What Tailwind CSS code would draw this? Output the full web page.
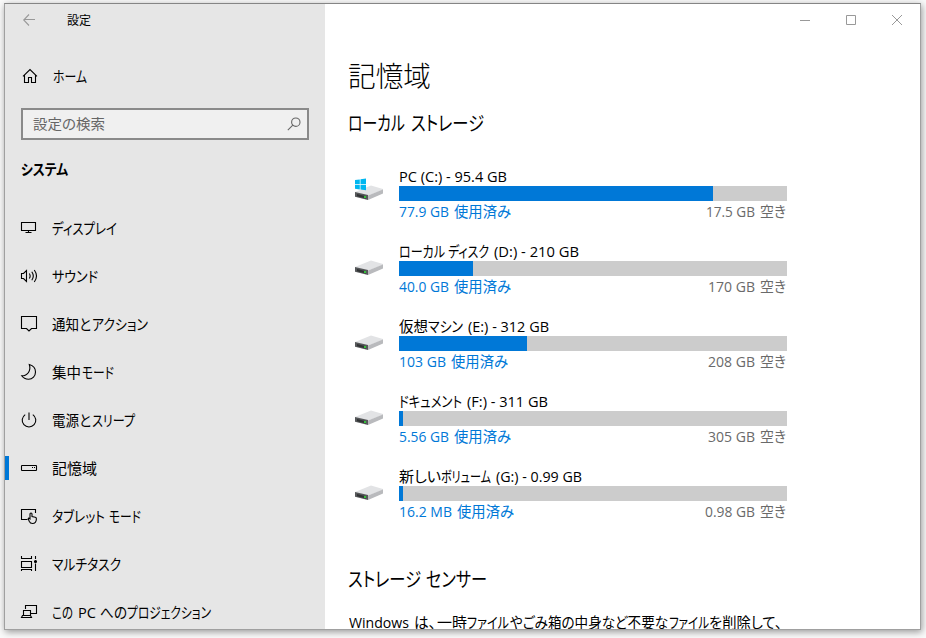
<!DOCTYPE html>
<html lang="ja">

<head>
    <meta charset="UTF-8">
    <meta name="viewport" content="width=device-width, initial-scale=1.0">
    <title>設定</title>
    <script src="https://cdn.jsdelivr.net/npm/@tailwindcss/browser@4"></script>
</head>

<body class="h-[638px] w-[926px] overflow-hidden bg-[#fafafa] pt-[3px] pl-[4px] font-['Open_Sans','Noto_Sans_CJK_JP',sans-serif] text-black">
    <div class="flex h-[627px] w-[917px] overflow-hidden border border-[#a0a0a0] border-t-[#858585] bg-white shadow-[1px_2px_7px_rgba(0,0,0,0.4)]">

        <!-- sidebar -->
        <aside class="flex w-[320px] shrink-0 flex-col bg-[#e6e6e6]">
            <div class="flex h-8 shrink-0 items-center pl-[18px]">
                <svg class="h-3 w-3" viewBox="0 0 12 12" fill="none" stroke="#999" stroke-width="1.1"><path d="M6 .5L.7 6L6 11.5M.7 5.5H12" /></svg>
                <div class="ml-[32px] pt-[2px] text-[12px] leading-8" data-runs="設定:0:24"></div>
            </div>

            <div class="mt-4 flex h-12 shrink-0 items-center pl-[17px]">
                <svg class="h-4 w-4" viewBox="0 0 16 16" fill="none" stroke="#000" stroke-width="1.1"><path d="M1 8.3L8 1.5L15 8.3M2.5 7V14.5H6.5V9.5H9.5V14.5H13.5V7" /></svg>
                <div class="ml-[15px] text-[15px] leading-6" data-runs="ホーム:0:34"></div>
            </div>

            <div class="mt-2 ml-4 flex h-8 w-[288px] shrink-0 items-center justify-between border-2 border-[#8a8a8a] bg-[#f0f0f0] pr-[6px] pl-[10px]">
                <div class="text-[14px] leading-7 text-[#666]" data-runs="設定の検索:0:72"></div>
                <svg class="h-[14px] w-[14px]" viewBox="0 0 14 14" fill="none" stroke="#666" stroke-width="1.1"><circle cx="8.8" cy="5.2" r="4.2" /><path d="M5.8 8.2L.8 13.2" /></svg>
            </div>

            <div class="mt-[14px] mb-5 ml-4 text-[15px] leading-[30px] font-bold" data-runs="システム:0:47"></div>

            <nav id="nav"></nav>
        </aside>

        <!-- content -->
        <main class="flex grow flex-col">
            <div class="flex h-8 shrink-0 justify-end">
                <div class="flex w-[46px] items-center justify-center"><svg class="h-[10px] w-[10px]" viewBox="0 0 10 10" stroke="#999"><path d="M0 5.5H10" /></svg></div>
                <div class="flex w-[46px] items-center justify-center"><svg class="h-[10px] w-[10px]" viewBox="0 0 10 10" stroke="#999" fill="none"><path d="M.5 .5H9.5V9.5H.5Z" /></svg></div>
                <div class="flex w-[46px] items-center justify-center"><svg class="h-[10px] w-[10px]" viewBox="0 0 10 10" stroke="#999"><path d="M0 0L10 10M10 0L0 10" /></svg></div>
            </div>

            <div class="pl-[23px]">
                <h1 class="mt-5 text-[28px] leading-10 font-light" data-runs="記憶域:0:83"></h1>
                <h2 class="mt-[13px] text-[20px] leading-[30px]" data-runs="ローカル:0:57|ストレージ:63:136"></h2>
                <div id="drives" class="mt-[26px]"></div>
                <h2 class="mt-[25px] text-[20px] leading-[30px]" data-runs="ストレージ:0:73|センサー:78:139"></h2>
                <p class="mt-[15px] text-[15px] leading-[24px]" data-runs="Windows:1:61|は、:66:88|一時:89:119|ファイル:119:161|やごみ箱の中身など不要な:162:320|ファイル:321:361|を削除して、:361:434"></p>
            </div>
        </main>
    </div>
</body>

<script>
    const icons = {
        display: '<path d="M1.5 3.5H15.5V11.5H1.5ZM8.5 11.5V13.5M5.5 13.5H11.5" />',
        sound: '<path d="M1.5 6.5H3.5L6.5 3.5V14.5L3.5 11.5H1.5ZM9.3 6.5Q11 9 9.3 11.5M11.8 4.7Q14.8 9 11.8 13.3M14.3 3Q18.7 9 14.3 15" />',
        notice: '<path d="M1.5 1.5H16.5V13.5H11.5L9 16L6.5 13.5H1.5Z" />',
        moon: '<path d="M9.3 1.5C13 2.5 15.5 5.5 15.5 9C15.5 13 12.5 16.2 8.6 16.2C5.6 16.2 3.2 15 1.7 12.8C7.8 12.8 11.2 7.6 9.3 1.5Z" />',
        power: '<path d="M5.2 3.6A6.8 6.8 0 1 0 12.8 3.6M9 1.5V9" />',
        storage: '<rect x="1.5" y="6.5" width="15" height="5" rx=".6" /><path d="M12 8.5H13M14 8.5H15" />',
        tablet: '<path d="M7.5 12.5H1.5V2.5H15.5V6M10 11V6.7Q11 5.3 12 6.7V9.5L15.3 10.2Q16.6 10.5 16.4 12Q16.2 16.5 12.5 16.5Q10.2 16.5 9.2 14.2L8.2 11.7Q8.5 10.5 10 11.8V10" />',
        task: '<path d="M1.5 1V3.5H11.5V1M1.5 6.5H11.5V12.5H1.5ZM1.5 16V14.5H11.5V16M15.5 1V4M15.5 8.5V16" /><circle cx="15.5" cy="6.5" r="1" fill="#000" />',
        project: '<path d="M5.5 6V2.5H16.5V10.5H11M3.5 12V7.5H10.5V12M2.5 12.5H10.5L11.5 14.5H1.5Z" />',
    };

    // runs are "text:start:end", offsets in px from the label's left edge
    const items = [
        ['display', 'ディスプレイ:0:65'],
        ['sound', 'サウンド:0:46'],
        ['notice', '通知と:0:39|アクション:40:96'],
        ['moon', '集中:0:29|モード:30:62'],
        ['power', '電源と:0:39|スリープ:40:83'],
        ['storage', '記憶域:0:45', true],
        ['tablet', 'タブレット:0:53|モード:57:89'],
        ['task', 'マルチタスク:0:69'],
        ['project', 'この:0:21|PC:26:44|への:48:75|プロジェクション:75:159'],
    ];

    document.querySelector('#nav').innerHTML = items.map(([icon, runs, active]) => `
        <div class="flex h-12 items-center">
            <div class="${active ? 'h-6 w-1 bg-[#0078d7]' : 'h-6 w-1'}"></div>
            <svg class="ml-[11px] h-[18px] w-[18px]" viewBox="0 0 18 18" fill="none" stroke="#000" stroke-width="1.1">${icons[icon]}</svg>
            <div class="ml-[14px] text-[15px] leading-6" data-runs="${runs}"></div>
        </div>
    `).join('');

    const drives = [
        { name: 'PC (C~) - 95.4 GB:0:108', used: '77.9 GB:0:50|使用済み:55:112', free: '17.5 GB:0:49|空き:54:80', bar: 314, win: true },
        { name: 'ローカル:0:46|ディスク:49:90|(D~) - 210 GB:95:180', used: '40.0 GB:0:50|使用済み:55:112', free: '170 GB:0:47|空き:52:78', bar: 74 },
        { name: '仮想:0:29|マシン:29:64|(E~) - 312 GB:69:150', used: '103 GB:0:47|使用済み:52:109', free: '208 GB:0:47|空き:52:78', bar: 128 },
        { name: 'ドキュメント:0:63|(F~) - 311 GB:68:149', used: '5.56 GB:0:50|使用済み:55:112', free: '305 GB:0:47|空き:52:78', bar: 4 },
        { name: '新しい:0:42|ボリューム:42:92|(G~) - 0.99 GB:97:183', used: '16.2 MB:0:53|使用済み:58:115', free: '0.98 GB:0:50|空き:55:81', bar: 4 },
    ];

    const winLogo = '<path fill="#00b7f0" d="M0 2.1L4.8 1.4V6.2H0ZM5.5 1.3L11 .5V6.2H5.5ZM0 6.9H4.8V11.4L0 10.8ZM5.5 6.9H11V12.2L5.5 11.5Z" />';

    document.querySelector('#drives').innerHTML = drives.map(d => `
        <div class="flex h-[75px]">
            <svg class="mt-[13px] ml-[7px] h-6 w-7 shrink-0" viewBox="0 0 28 24">
                <path fill="#e2e3e5" d="M0 14L16 7.5L28 11V12L13 17.5L0 14.5Z" />
                <path fill="#b9babd" d="M13 17.5L28 11.5V15.5L13 22Z" />
                <path fill="#56585a" d="M0 14L13 17V22L0 18.7Z" />
                <path fill="#303234" d="M2 16L11 18.2V20.5L2 18.2Z" />
                <path fill="#35c13a" d="M9 18H11V20H9Z" />
                ${d.win ? winLogo : ''}
            </svg>
            <div class="ml-4 w-[388px]">
                <div class="h-[21px] text-[15px] leading-[22px]" data-runs="${d.name}"></div>
                <div class="h-[15px] bg-[#ccc]"><div class="h-[15px] bg-[#0078d7]" style="width:${d.bar}px"></div></div>
                <div class="flex h-[22px] justify-between pr-px text-[15px] leading-[20px]">
                    <div class="text-[#0078d7]" data-runs="${d.used}"></div>
                    <div class="text-[#6a6a6a]" data-runs="${d.free}"></div>
                </div>
            </div>
        </div>
    `).join('');

    // squeeze each run of text into its own width, once the styles are in
    window.addEventListener('load', () => {
        for (const el of document.querySelectorAll('[data-runs]')) {
            el.classList.add('whitespace-nowrap');
            let pos = 0;
            for (const run of el.dataset.runs.split('|')) {
                const [text, start, end] = run.split(':');
                const span = document.createElement('span');
                span.className = "inline-block origin-left [font-feature-settings:'palt']";
                span.textContent = text.replace('~', ':');
                el.append(span);
                const w = span.getBoundingClientRect().width;
                span.style.marginLeft = (start - pos) + 'px';
                span.style.marginRight = (end - start - w) + 'px';
                span.style.transform = `scaleX(${(end - start) / w})`;
                pos = end;
            }
        }
    });
</script>

</html>
